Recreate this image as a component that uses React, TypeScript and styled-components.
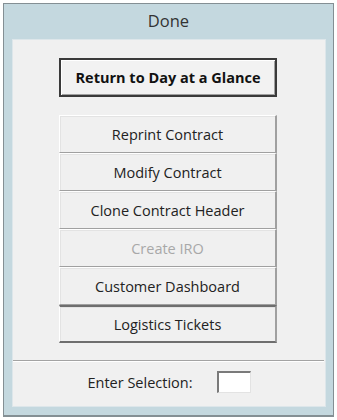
import styled, { createGlobalStyle } from 'styled-components';

const GlobalStyle = createGlobalStyle`
	html, body {
		margin: 0;
		padding: 0;
		background: #ffffff;
	}
	body {
		font-family: 'Open Sans', 'Noto Sans', sans-serif;
	}
`;

const items = [
	{ label: 'Reprint Contract' },
	{ label: 'Modify Contract' },
	{ label: 'Clone Contract Header' },
	{ label: 'Create IRO', disabled: true },
	{ label: 'Customer Dashboard' },
	{ label: 'Logistics Tickets', focused: true },
];

const App = () => {
	return (
		<>
			<GlobalStyle />
			<Window>
				<TitleBar>Done</TitleBar>
				<Panel>
					<PrimaryButton>Return to Day at a Glance</PrimaryButton>
					<MenuList>
						{items.map((item) => (
							<MenuButton key={item.label} $disabled={item.disabled} $focused={item.focused}>
								{item.label}
							</MenuButton>
						))}
					</MenuList>
					<Divider />
					<Footer>
						<Label>Enter Selection:</Label>
						<SelectionInput />
					</Footer>
				</Panel>
			</Window>
		</>
	);
};

export default App;

const Window = styled.div`
	margin: 3px;
	height: 414px;
	box-sizing: border-box;
	border: 1px solid #848f94;
	border-bottom-width: 2px;
	background: #c4d8df;
	display: flex;
	flex-direction: column;
`;

const TitleBar = styled.div`
	height: 35px;
	display: flex;
	align-items: center;
	justify-content: center;
	font-size: 16.5px;
	color: #333;
	padding-bottom: 2px;
	box-sizing: border-box;
`;

const Panel = styled.div`
	flex: 1;
	margin: 0 7px 8px 8px;
	background: #f0f0f0;
	border: 1px solid #dde6ea;
	display: flex;
	flex-direction: column;
	align-items: center;
	padding-top: 18px;
`;

const PrimaryButton = styled.button`
	width: 218px;
	height: 39px;
	box-sizing: border-box;
	margin-right: 2px;
	background: #f2f2f2;
	border: 2px solid #3a3a3a;
	box-shadow: inset 1px 1px 0 #ffffff, inset -1px -1px 0 #a0a0a0;
	font-family: 'Open Sans', 'Noto Sans', sans-serif;
	font-weight: 700;
	font-size: 14.5px;
	color: #111;
	padding: 0;
`;

const MenuList = styled.div`
	margin-top: 18px;
	margin-right: 2px;
	width: 218px;
	display: flex;
	flex-direction: column;
`;

const MenuButton = styled.button<{ $disabled?: boolean; $focused?: boolean }>`
	height: 38px;
	box-sizing: border-box;
	background: #f0f0f0;
	border: none;
	border-left: 1px solid #ffffff;
	border-top: ${(p) => (p.$focused ? '2px solid #6e6e6e' : '1px solid #ffffff')};
	border-right: 2px solid #a0a0a0;
	border-bottom: ${(p) => (p.$focused ? '2px solid #6e6e6e' : '1px solid #a0a0a0')};
	box-shadow: inset 1px 1px 0 #e3e3e3;
	font-family: 'Open Sans', 'Noto Sans', sans-serif;
	font-size: 14.5px;
	color: ${(p) => (p.$disabled ? '#a8a8a8' : '#222')};
	padding: 0;
`;

const Divider = styled.div`
	margin-top: 17px;
	align-self: stretch;
	margin-right: 1px;
	height: 1px;
	background: #a3a3a3;
	border-bottom: 1px solid #ffffff;
`;

const Footer = styled.div`
	flex: 1;
	display: flex;
	align-items: center;
	justify-content: center;
	gap: 24px;
	padding-bottom: 4px;
`;

const Label = styled.span`
	font-size: 14.5px;
	color: #222;
`;

const SelectionInput = styled.input`
	width: 34px;
	height: 22px;
	box-sizing: border-box;
	background: #ffffff;
	border: none;
	border-left: 2px solid #7a7a7a;
	border-top: 2px solid #7a7a7a;
	border-right: 1px solid #e3e3e3;
	border-bottom: 1px solid #e3e3e3;
	padding: 0;
	outline: none;
`;
